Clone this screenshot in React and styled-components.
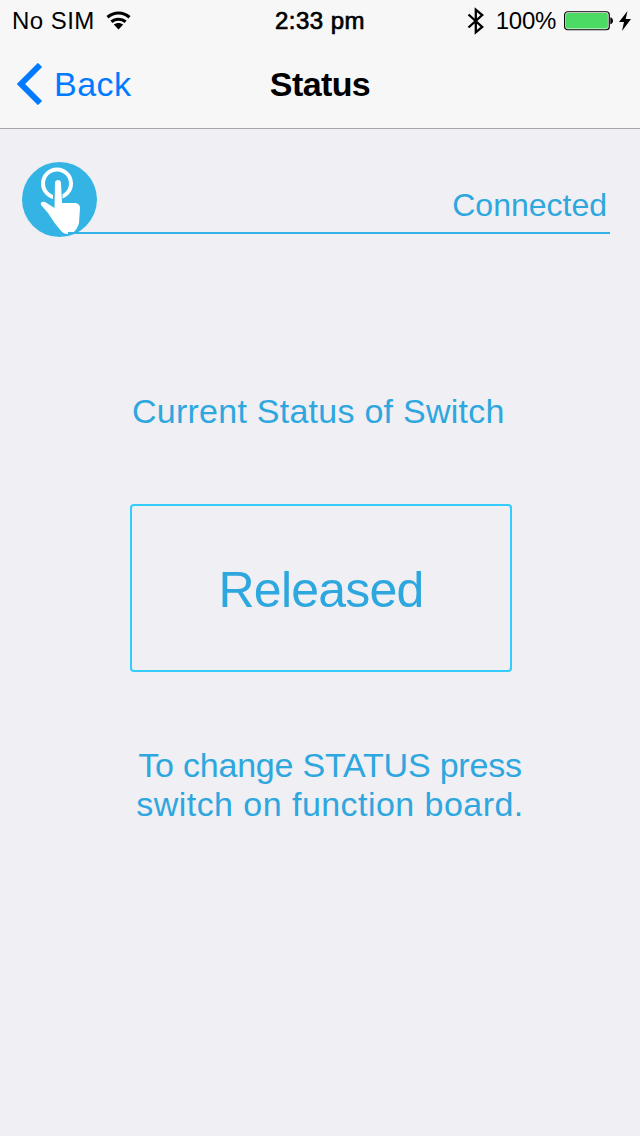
import React from "react";
import styled, { createGlobalStyle } from "styled-components";

const GlobalStyle = createGlobalStyle`
  body {
    margin: 0;
    background: #efeff4;
    font-family: "Liberation Sans", Arial, sans-serif;
  }
`;

const Screen = styled.div`
  width: 640px;
  height: 1136px;
  overflow: hidden;
  background: #efeff4;
  color: #2ea7de;
`;

const Header = styled.header`
  box-sizing: border-box;
  height: 129px;
  background: #f7f7f7;
  border-bottom: 1px solid #a7a7ab;
  color: #000;
`;

const StatusBar = styled.div`
  display: grid;
  grid-template-columns: 1fr 100px 1fr;
  height: 41px;
  font-size: 24px;
  line-height: 41px;
`;

const StatusGroup = styled.div`
  display: flex;
  align-items: center;
  justify-content: ${(p) => (p.$end ? "flex-end" : "flex-start")};
  padding: ${(p) => (p.$end ? "0 9px 0 0" : "0 0 0 12px")};

  svg {
    flex: none;
  }
`;

const Label = styled.span`
  white-space: nowrap;
  letter-spacing: ${(p) => p.$spacing || 0}px;
`;

const Clock = styled.time`
  text-align: center;
  white-space: nowrap;
  letter-spacing: 0.5px;
  -webkit-text-stroke: 0.7px #000;
`;

const NavBar = styled.nav`
  display: grid;
  grid-template-columns: 1fr 200px 1fr;
  height: 87px;
  font-size: 34px;
  line-height: 87px;
`;

const BackButton = styled.a`
  display: flex;
  align-items: center;
  gap: 11px;
  padding-left: 16px;
  color: #007aff;

  svg {
    margin-bottom: 1px;
  }
`;

const Title = styled.h1`
  margin: 0;
  font-size: 34px;
  font-weight: 700;
  text-align: center;
  letter-spacing: -0.6px;
`;

const Device = styled.section`
  display: flex;
  height: 75px;
  padding: 33px 30px 0 22px;
`;

const DeviceIcon = styled.svg`
  flex: none;
`;

const Connection = styled.div`
  flex: 1;
  box-sizing: border-box;
  height: 72px;
  margin-left: -29px;
  padding-top: 23px;
  padding-right: 3px;
  border-bottom: 2px solid #34b4e4;
  font-size: 32px;
  line-height: 40px;
  text-align: right;
`;

const Caption = styled.h2`
  margin: 154px 0 0 132px;
  font-size: 34px;
  font-weight: 400;
  line-height: 40px;
`;

const StateBox = styled.div`
  box-sizing: border-box;
  width: 382px;
  height: 168px;
  margin: 73px 0 0 130px;
  padding-top: 2px;
  border: 2px solid #33ccff;
  border-radius: 4px;
  font-size: 50px;
  line-height: 164px;
  text-align: center;
`;

const Hint = styled.p`
  margin: 74px 0 0 10px;
  width: 640px;
  font-size: 34px;
  line-height: 39px;
  text-align: center;
`;

const Wifi = () => (
  <svg width="26" height="20" viewBox="0 0 26 20" fill="none" stroke="#000" strokeWidth="3.2">
    <path d="M1.5 7.2C8 1.6 17 1.6 23.5 7.2" />
    <path d="M5.4 11.8C9.2 8.4 15.8 8.4 19.6 11.8" />
    <path d="M12.5 19.4 7.8 14.6C10.4 12.4 14.6 12.4 17.2 14.6Z" fill="#000" stroke="none" />
  </svg>
);

const WifiSlot = styled.div`
  display: flex;
  margin-left: 11px;
  margin-bottom: 2px;
`;

const Bluetooth = () => (
  <svg width="18" height="28" viewBox="0 0 18 28" fill="none" stroke="#000" strokeWidth="2.3">
    <path d="M1.5 7.5 15.2 20 8.8 25.3V2.7L15.2 8 1.5 20.5" />
  </svg>
);

const Battery = () => (
  <svg width="50" height="20" viewBox="0 0 50 20">
    <rect x=".65" y=".75" width="44.6" height="18" rx="3" fill="#fff" stroke="#000" strokeWidth="1.2" />
    <rect x="2" y="2.1" width="41.9" height="15.4" rx="1.5" fill="#4cd964" />
    <path d="M46.3 6.2C49.9 7 49.9 12.5 46.3 13.3Z" />
  </svg>
);

const Bolt = () => (
  <svg width="12" height="20" viewBox="0 0 12 20">
    <path d="M8.5 0 0 11H5L3 20 12 8H6.7Z" />
  </svg>
);

const BatterySlot = styled.div`
  display: flex;
  gap: 5px;
  margin-left: 8px;
`;

const BluetoothSlot = styled.div`
  display: flex;
  margin-right: 11px;
`;

export default function App() {
  return (
    <Screen>
      <GlobalStyle />
      <Header>
        <StatusBar>
          <StatusGroup>
            <Label $spacing={0.45}>No SIM</Label>
            <WifiSlot><Wifi /></WifiSlot>
          </StatusGroup>
          <Clock>2:33 pm</Clock>
          <StatusGroup $end>
            <BluetoothSlot><Bluetooth /></BluetoothSlot>
            <Label $spacing={-0.3}>100%</Label>
            <BatterySlot><Battery /><Bolt /></BatterySlot>
          </StatusGroup>
        </StatusBar>
        <NavBar>
          <BackButton>
            <svg width="27" height="42" viewBox="0 0 27 42" fill="none" stroke="#007aff" strokeWidth="6">
              <path d="M24 2 5 21 24 40" />
            </svg>
            <Label $spacing={0.45}>Back</Label>
          </BackButton>
          <Title>Status</Title>
        </NavBar>
      </Header>
      <Device>
        <DeviceIcon width="75" height="75" viewBox="0 0 75 75">
          <circle cx="37.5" cy="37.5" r="37.5" fill="#34b4e4" />
          <circle cx="35" cy="21.5" r="14" fill="none" stroke="#fff" strokeWidth="4" />
          <path d="M31 22H40.5V41H31Z" fill="#34b4e4" />
          <path d="M33 21C33 17 39 17 39 21L40 41H54Q58 42 58 46L57 61Q55 68 51 70.5L46 72Q43 72.5 40 70L33 61.5 26 51 19 43Q18 39 23 40L32.5 46Z" fill="#fff" />
        </DeviceIcon>
        <Connection><Label>Connected</Label></Connection>
      </Device>
      <Caption><Label $spacing={0.25}>Current Status of Switch</Label></Caption>
      <StateBox><Label $spacing={-0.8}>Released</Label></StateBox>
      <Hint>
        <Label $spacing={-0.2}>To change STATUS press</Label>
        <br />
        <Label $spacing={0.45}>switch on function board.</Label>
      </Hint>
    </Screen>
  );
}
